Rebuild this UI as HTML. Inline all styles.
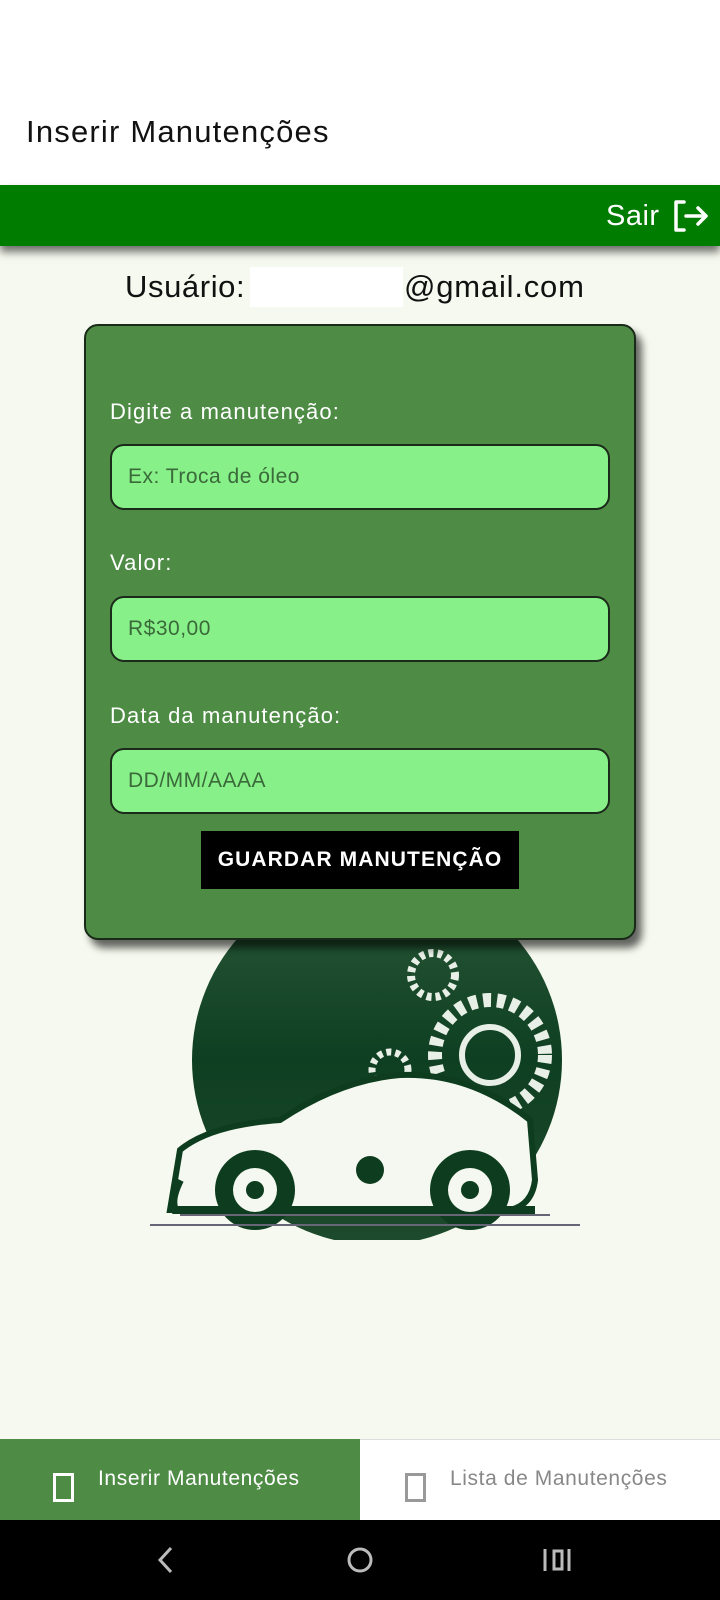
<!DOCTYPE html>
<html><head><meta charset="utf-8"><style>
*{margin:0;padding:0;box-sizing:border-box}
body{width:720px;height:1600px;position:relative;overflow:hidden;background:#f6f9ef;font-family:"Liberation Sans",sans-serif}
.abs{position:absolute;white-space:nowrap}
.top{left:0;top:0;width:720px;height:185px;background:#fff}
.title{left:26px;top:114px;font-size:31px;color:#111;letter-spacing:1.2px}
.bar{left:0;top:185px;width:720px;height:61px;background:#007c00;box-shadow:0 6px 8px rgba(0,0,0,.55)}
.sair{left:606px;top:200px;font-size:29px;color:#fff;letter-spacing:.5px}
.user{left:125px;top:269px;font-size:31px;color:#111;letter-spacing:.6px}
.mask{left:250px;top:267px;width:153px;height:40px;background:#fff}
.card{left:84px;top:324px;width:552px;height:616px;background:#4e8c46;border:2px solid #1a2a18;border-radius:14px;box-shadow:6px 8px 8px rgba(0,0,0,.6)}
.lbl{left:110px;font-size:22px;color:#fff;letter-spacing:1.1px}
.inp{left:110px;width:500px;height:66px;background:#88f088;border:2px solid #1c2a1c;border-radius:14px;font-size:21px;color:#3a6a3a;padding:19px 16px;letter-spacing:.5px}
.btn{left:201px;top:831px;width:318px;height:58px;background:#000;color:#fff;font-weight:bold;font-size:21px;text-align:center;line-height:58px;letter-spacing:1.1px}
.tabL{left:0;top:1439px;width:360px;height:81px;background:#4e8c46}
.tabR{left:360px;top:1439px;width:360px;height:81px;background:#fff;border-top:1px solid #ddd}
.nav{left:0;top:1520px;width:720px;height:80px;background:#000}
</style></head><body>
<div class="abs top"></div>
<div class="abs title">Inserir Manutenções</div>
<div class="abs bar"></div>
<div class="abs sair">Sair</div>
<svg class="abs" style="left:672px;top:199px" width="38" height="34" viewBox="0 0 38 34" fill="none" stroke="#fff" stroke-width="3.5" stroke-linecap="round" stroke-linejoin="round"><path d="M12 3H4v28h8M14 17h20M26 9l8 8-8 8"/></svg>
<div class="abs user">Usuário:</div>
<div class="abs mask"></div>
<div class="abs" style="left:404px;top:269px;font-size:31px;color:#111;letter-spacing:.8px">@gmail.com</div>

<svg class="abs" style="left:140px;top:880px" width="460" height="360" viewBox="0 0 460 360">
<defs><linearGradient id="g" x1="0" y1="0" x2="0" y2="1"><stop offset="0" stop-color="#2a5a38"/><stop offset=".5" stop-color="#0f3f22"/><stop offset="1" stop-color="#1e4a2c"/></linearGradient></defs>
<circle cx="237" cy="180" r="185" fill="url(#g)"/>
<g fill="none" stroke="#e8efe6" stroke-width="6">
<circle cx="350" cy="175" r="55" stroke-width="14" stroke-dasharray="8 6"/>
<circle cx="350" cy="175" r="28"/>
<circle cx="293" cy="95" r="22" stroke-dasharray="5 4" stroke-width="8"/>
<circle cx="250" cy="190" r="18" stroke-dasharray="5 4" stroke-width="7"/>
<circle cx="230" cy="290" r="28" stroke-dasharray="5 4" stroke-width="10"/>
</g>
<path d="M30 330 L40 270 Q70 245 140 240 Q200 200 260 195 Q330 192 390 240 L395 300 Q392 325 370 330 Z" fill="#f4f8f0" stroke="#0d3d1e" stroke-width="6"/>
<path d="M40 300 Q30 320 35 330 L395 330" fill="none" stroke="#0d3d1e" stroke-width="8"/>
<circle cx="115" cy="310" r="40" fill="#0d3d1e"/><circle cx="115" cy="310" r="22" fill="#f4f8f0"/><circle cx="115" cy="310" r="9" fill="#0d3d1e"/>
<circle cx="330" cy="310" r="40" fill="#0d3d1e"/><circle cx="330" cy="310" r="22" fill="#f4f8f0"/><circle cx="330" cy="310" r="9" fill="#0d3d1e"/>
<circle cx="230" cy="290" r="14" fill="#0d3d1e"/>
<path d="M10 345H440M40 335H410" stroke="#667" stroke-width="2"/>
</svg>

<div class="abs card"></div>
<div class="abs lbl" style="top:399px">Digite a manutenção:</div>
<div class="abs inp" style="top:444px">Ex: Troca de óleo</div>
<div class="abs lbl" style="top:550px">Valor:</div>
<div class="abs inp" style="top:596px">R$30,00</div>
<div class="abs lbl" style="top:703px">Data da manutenção:</div>
<div class="abs inp" style="top:748px">DD/MM/AAAA</div>
<div class="abs btn">GUARDAR MANUTENÇÃO</div>

<div class="abs tabL"></div>
<div class="abs tabR"></div>
<div class="abs" style="left:53px;top:1473px;width:21px;height:29px;border:3px solid #fff"></div>
<div class="abs" style="left:98px;top:1467px;font-size:21px;color:#fff;letter-spacing:.6px">Inserir Manutenções</div>
<div class="abs" style="left:405px;top:1473px;width:21px;height:29px;border:3px solid #999"></div>
<div class="abs" style="left:450px;top:1467px;font-size:21px;color:#888;letter-spacing:.6px">Lista de Manutenções</div>
<div class="abs nav"></div>
<svg class="abs" style="left:150px;top:1540px" width="440" height="40" viewBox="0 0 440 40" fill="none" stroke="#bbb" stroke-width="3"><path d="M21 8L10 20l11 12"/><circle cx="210" cy="20" r="11"/><path d="M395 9v22M404 11h8v18h-8zM419 9v22"/></svg>
</body></html>
